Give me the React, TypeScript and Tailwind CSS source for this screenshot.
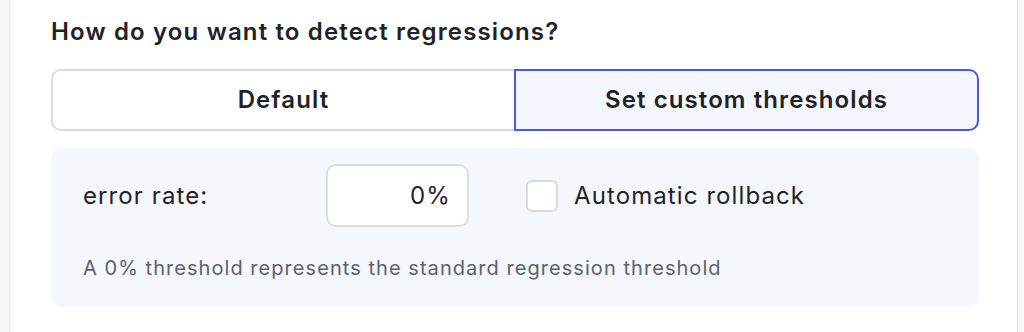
import React, { useState } from 'react';

export default function App() {
  const [mode, setMode] = useState<'default' | 'custom'>('custom');
  const [rollback, setRollback] = useState(false);

  return (
    <div className="flex h-[332px] w-full bg-white font-['Inter',sans-serif] tracking-[1.1px] text-[#1f2329]">
      <div className="w-[10px] shrink-0 border-r border-[#e6e8ec] bg-[#f6f7f9]" />

      <div className="flex-1 pl-[41px] pr-[38px] pt-[16px]">
        <h2 className="text-[24px] font-semibold leading-[32px] tracking-[1.15px]">How do you want to detect regressions?</h2>

        <div className="mt-[21px] flex h-[62px]">
          <button
            onClick={() => setMode('default')}
            className={
              mode === 'default'
                ? 'flex-1 rounded-l-[10px] border-2 border-[#4b5bd8] bg-[#f4f7fd] text-[24px] font-semibold'
                : 'flex-1 rounded-l-[10px] border-2 border-r-0 border-[#d9dbe0] bg-white text-[24px] font-semibold'
            }
          >
            Default
          </button>
          <button
            onClick={() => setMode('custom')}
            className={
              mode === 'custom'
                ? 'flex-1 rounded-r-[10px] border-2 border-[#4b5bd8] bg-[#f4f7fd] text-[24px] font-semibold'
                : 'flex-1 rounded-r-[10px] border-2 border-l-0 border-[#d9dbe0] bg-white text-[24px] font-semibold'
            }
          >
            Set custom thresholds
          </button>
        </div>

        <div className="mt-[17px] h-[159px] rounded-[10px] bg-[#f4f7fc] px-[32px] pt-[16px]">
          <div className="flex items-center">
            <span className="w-[243px] text-[24px]">error rate:</span>
            <div className="flex h-[63px] w-[143px] items-center justify-end rounded-[10px] border-2 border-[#dcdee3] bg-white pr-[16px] text-[24px]">
              0%
            </div>
            <label className="ml-[57px] flex cursor-pointer items-center">
              <span
                onClick={() => setRollback(!rollback)}
                className="h-[32px] w-[32px] rounded-[6px] border-2 border-[#d9dbe0] bg-white"
              />
              <span className="ml-[16px] text-[24px]">Automatic rollback</span>
            </label>
          </div>
          <p className="mt-[26px] text-[20px] tracking-[1.05px] text-[#5d626d]">
            A 0% threshold represents the standard regression threshold
          </p>
        </div>
      </div>

      <div className="w-[7px] shrink-0 border-l border-[#e6e8ec] bg-[#f6f7f9]" />
    </div>
  );
}
